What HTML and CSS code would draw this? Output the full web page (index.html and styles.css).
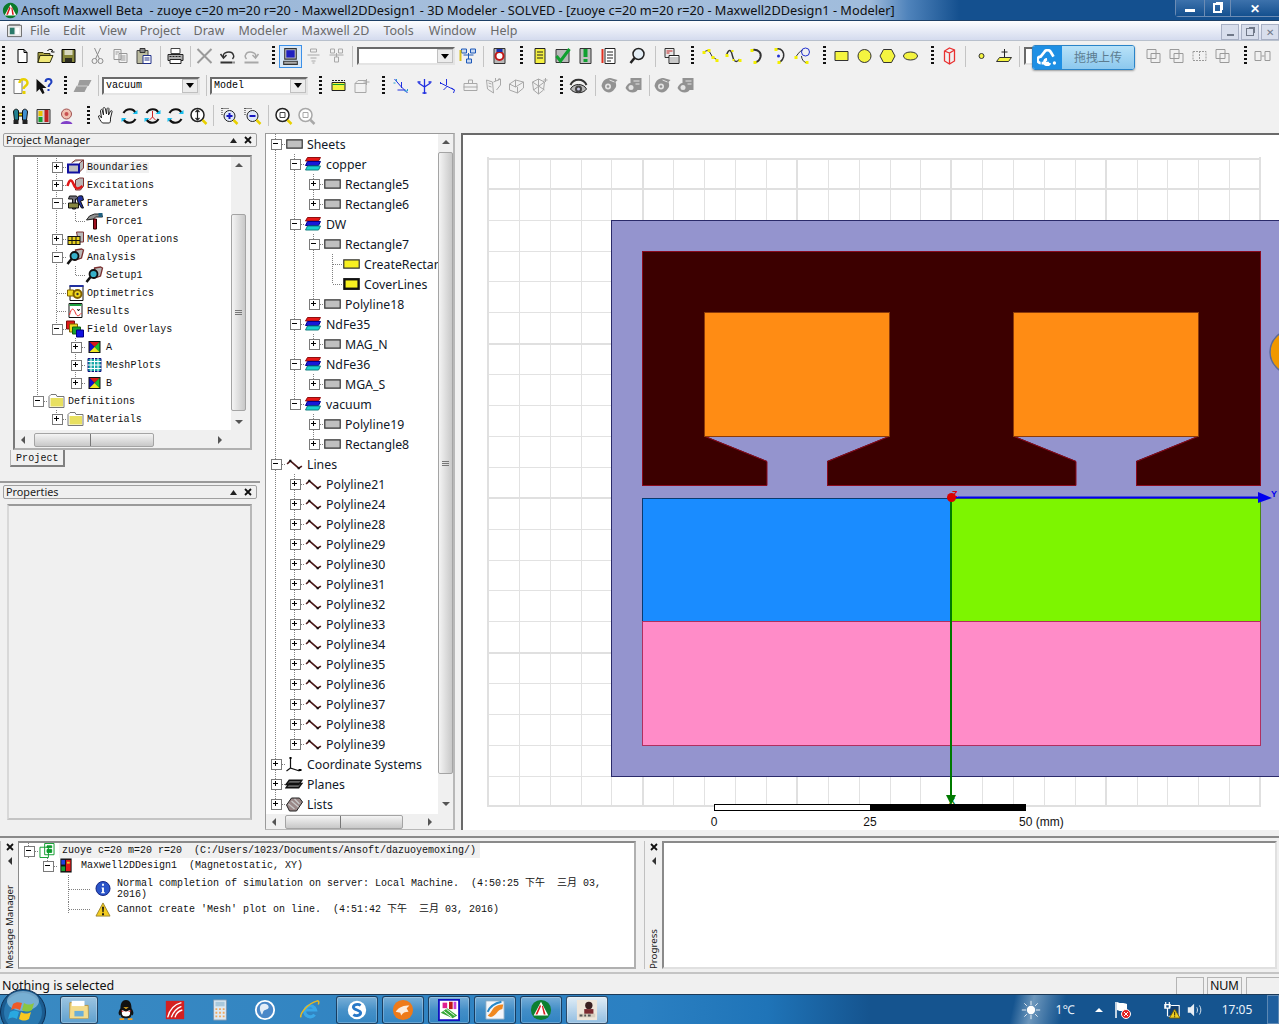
FILE: index.html
```html
<!DOCTYPE html>
<html lang="en">
<head>
<meta charset="utf-8">
<title>Ansoft Maxwell Beta</title>
<link rel="stylesheet" href="styles.css">
</head>
<body>
<svg class="defs" width="0" height="0" aria-hidden="true">
<defs>
<symbol id="i-mx" viewBox="0 0 20 20"><path d="M10 1a9 9 0 1 0 .01 0z" fill="#0a7a2a"/><path d="M10 3l7 13H3z" fill="#fff"/><path d="M9 5L5 15h2l3-8zM11 7l1 8h2l-2-9z" fill="#d81e1e"/></symbol>
<symbol id="i-new" viewBox="0 0 20 20"><path d="M5.500 3.500h6l3 3v10h-9z" fill="#fff" stroke="#000"/><path d="M11.500 3.500v3h3" fill="none" stroke="#000"/></symbol>
<symbol id="i-open" viewBox="0 0 20 20"><path d="M2.500 6.500h5l1 1h6v2h-10l-2 7z" fill="#a8a040" stroke="#303010"/><path d="M4.500 9.500h13l-3 7h-12z" fill="#f0e878" stroke="#303010"/><path d="M12 5c1-2 3-2 5-1l-1 2h3" fill="none" stroke="#000"/></symbol>
<symbol id="i-save" viewBox="0 0 20 20"><path d="M3.500 3.500h13v13h-13z" fill="#85853a" stroke="#000"/><path d="M6 4h8v5H6z" fill="#d8d8c0"/><path d="M6.500 12h7v4.500h-7z" fill="#2c2c20"/></symbol>
<symbol id="i-cut" viewBox="0 0 20 20" fill="none" stroke="#8c8c8c"><path d="M7 2l5 11M13 2L8 13"/><circle cx="7" cy="15" r="2.500"/><circle cx="13" cy="15" r="2.500"/></symbol>
<symbol id="i-copy" viewBox="0 0 20 20" fill="#f4f4f4" stroke="#969696"><path d="M3.500 3.500h7v10h-7zM8.500 7.500h8v9h-8z"/><path d="M10 10h5M10 12h5M10 14h5M5 6h4M5 8h2" fill="none"/></symbol>
<symbol id="i-paste" viewBox="0 0 20 20"><path d="M3.500 4.500h11v13h-11z" fill="#bcbca0" stroke="#444"/><path d="M6.500 2.500h5v4h-5z" fill="#888" stroke="#333"/><path d="M9.500 9.500h8v8h-8z" fill="#fff" stroke="#20308a"/><path d="M11 12h5M11 14h5" stroke="#20308a"/></symbol>
<symbol id="i-print" viewBox="0 0 20 20"><path d="M5.500 2.500h9v5h-9z" fill="#fff" stroke="#444"/><path d="M2.500 8.500h15v6h-15z" fill="#b0b0b0" stroke="#222"/><path d="M4.500 13.500h11v4h-11z" fill="#fff" stroke="#222"/><path d="M4 10.500h12" stroke="#222" stroke-dasharray="2 1"/></symbol>
<symbol id="i-x" viewBox="0 0 20 20"><path d="M3 3l14 14M17 3L3 17" stroke="#9a9a9a" stroke-width="2"/></symbol>
<symbol id="i-undo" viewBox="0 0 20 20" fill="none" stroke="#333"><path d="M6 11c-2-5 8-7 10-2 1 2 0 3-1 4" stroke-width="1.500"/><path d="M3 8l3 4 3-3" stroke-width="1.500"/><path d="M3 16.500h14" stroke-width="2" stroke-dasharray="12 1"/></symbol>
<symbol id="i-redo" viewBox="0 0 20 20" fill="none" stroke="#a8a8a8"><path d="M14 11c2-5-8-7-10-2-1 2 0 3 1 4" stroke-width="1.500"/><path d="M17 8l-3 4-3-3" stroke-width="1.500"/><path d="M3 16.500h14" stroke-width="2"/></symbol>
<symbol id="i-model" viewBox="0 0 20 20"><path d="M4.500 2.500h11v10h-11z" fill="#c4c4c4" stroke="#333"/><path d="M6 4h8v7H6z" fill="#2020c0"/><path d="M3.500 14.500h13v3h-13z" fill="#aaa" stroke="#333"/></symbol>
<symbol id="i-tree1" viewBox="0 0 20 20" fill="none" stroke="#a8a8a8"><path d="M7 3h6v3H7zM4 9h12M7 12h6M8 15h4M9 17h2"/></symbol>
<symbol id="i-tree2" viewBox="0 0 20 20" fill="none" stroke="#a8a8a8"><path d="M4 3h4v4H4zM12 3h4v4h-4zM10 7v4M3 9h14M8 11h4v5H8z"/></symbol>
<symbol id="i-hier" viewBox="0 0 20 20" fill="none" stroke="#1c58b8"><path d="M3 3h5v4H3zM12 3h5v4h-5zM8 13h5v4H8zM10 7v6M5 9h10" fill="#c8d8f0"/><path d="M2 4v11" stroke="#d8c020" stroke-width="2"/></symbol>
<symbol id="i-q" viewBox="0 0 20 20"><path d="M4.500 2.500h11v15h-11z" fill="#b8b8b8" stroke="#333"/><circle cx="10" cy="10" r="4" fill="#fff" stroke="#c01818" stroke-width="2"/><path d="M7 3h6v3H7z" fill="#1830b0"/></symbol>
<symbol id="i-doc1" viewBox="0 0 20 20"><path d="M5.500 2.500h10v15h-10z" fill="#f4f040" stroke="#222"/><path d="M7.500 6h6M7.500 9h6M7.500 12h6" stroke="#222"/></symbol>
<symbol id="i-check" viewBox="0 0 20 20"><path d="M3.500 3.500h13v13h-13z" fill="#b8b8b8" stroke="#333"/><path d="M4 10l4 5 9-12" fill="none" stroke="#10a030" stroke-width="3"/></symbol>
<symbol id="i-pill" viewBox="0 0 20 20"><path d="M4.500 2.500h11v15h-11z" fill="#c0c0c0" stroke="#333"/><path d="M8 3h4v8H8z" fill="#10a030"/><path d="M8 13h4v3H8z" fill="#10a030"/></symbol>
<symbol id="i-doc2" viewBox="0 0 20 20"><path d="M3 3h2v14H3z" fill="#e03020"/><path d="M6.500 2.500h10v15h-10z" fill="#fff" stroke="#222"/><path d="M8.500 6h6M8.500 9h6M8.500 12h6M8.500 15h4" stroke="#222"/></symbol>
<symbol id="i-mag" viewBox="0 0 20 20"><circle cx="11" cy="8" r="5.500" fill="#e4eef6" stroke="#222" stroke-width="1.500"/><path d="M7 12l-4 5" stroke="#222" stroke-width="2.500"/></symbol>
<symbol id="i-calc" viewBox="0 0 20 20"><path d="M3.500 2.500h9v9h-9z" fill="#e8e8e8" stroke="#333"/><path d="M5 5h6M5 7h3" stroke="#c02020"/><path d="M7.500 9.500h10v8h-10z" fill="#fff" stroke="#222"/><path d="M9 12h7M9 14h7M9 16h7" stroke="#222" stroke-dasharray="1 1"/></symbol>
<symbol id="i-line" viewBox="0 0 20 20"><path d="M3 6l5-2 4 7 5 3" fill="none" stroke="#333"/><path d="M2 5h3v3H2zM7 3h3v3H7zM11 10h3v3h-3zM15 13h3v3h-3z" fill="#f4f000"/></symbol>
<symbol id="i-spline" viewBox="0 0 20 20"><path d="M3 9c3-8 5-4 6 1s4 8 7 3" fill="none" stroke="#333" stroke-width="1.400"/><path d="M2 8h3v3H2zM8 4h2v2H8zM9 13h2v2H9zM15 13h3v3h-3z" fill="#f4f000"/></symbol>
<symbol id="i-arc1" viewBox="0 0 20 20"><path d="M6 4c6-1 9 3 8 7-1 3-3 5-5 5" fill="none" stroke="#333" stroke-width="2"/><path d="M4 3h3v3H4zM7 15h3v3H7z" fill="#f4f000"/></symbol>
<symbol id="i-arc2" viewBox="0 0 20 20"><path d="M7 3c5-1 8 3 7 8-1 3-3 5-5 5" fill="none" stroke="#333" stroke-width="1.500"/><circle cx="9" cy="10" r="1.500" fill="#2030d0"/><path d="M5 2h3v3H5zM8 15h3v3H8z" fill="#f4f000"/></symbol>
<symbol id="i-eq" viewBox="0 0 20 20"><path d="M3 11c2-2 4-6 7-7M9 10c0 3 2 6 5 7" fill="none" stroke="#333"/><ellipse cx="13" cy="6" rx="4" ry="4" fill="none" stroke="#2030d0"/><path d="M2 10h3v3H2zM13 15h3v3h-3z" fill="#f4f000"/></symbol>
<symbol id="i-yrect" viewBox="0 0 20 20"><path d="M3.500 5.500h13v9h-13z" fill="#f4f440" stroke="#333"/></symbol>
<symbol id="i-ycirc" viewBox="0 0 20 20"><circle cx="10" cy="10" r="6.500" fill="#f4f440" stroke="#333"/></symbol>
<symbol id="i-yhex" viewBox="0 0 20 20"><path d="M6 3.500h8l3.500 6.500L14 16.500H6L2.500 10z" fill="#f4f440" stroke="#333"/></symbol>
<symbol id="i-yell" viewBox="0 0 20 20"><ellipse cx="10" cy="10" rx="7" ry="4" fill="#f4f440" stroke="#333"/></symbol>
<symbol id="i-box" viewBox="0 0 20 20" fill="none" stroke="#e83030" stroke-width="1.300"><path d="M10 2l5 2v11l-5 3-5-3V5zM5 5l5 2 5-3M10 7v11"/></symbol>
<symbol id="i-pt" viewBox="0 0 20 20"><circle cx="10" cy="10" r="2.500" fill="#f4f440" stroke="#333"/></symbol>
<symbol id="i-plane" viewBox="0 0 20 20"><path d="M5 11.500h12l-3 4H2z" fill="#f4f440" stroke="#333"/><path d="M10 3v8M7 6h6" stroke="#222"/></symbol>
<symbol id="i-ov1" viewBox="0 0 20 20"><path d="M3.500 3.500h9v9h-9zM7.500 7.500h9v9h-9z" fill="none" stroke="#9a9a9a"/></symbol>
<symbol id="i-ov2" viewBox="0 0 20 20"><path d="M3.500 5.500h13v9h-13zM10 5v10" fill="none" stroke="#9a9a9a" stroke-dasharray="2 1"/></symbol>
<symbol id="i-sm" viewBox="0 0 20 20"><path d="M2.500 5.500h6v9h-6zM12.500 5.500h5v9h-5zM9 10h3" fill="none" stroke="#9a9a9a"/></symbol>
<symbol id="i-help" viewBox="0 0 20 20"><path d="M3.500 3.500h8v14h-8z" fill="#fff" stroke="#777"/><path d="M9 7c0-5 8-5 8 0 0 3-4 3-4 6" fill="none" stroke="#e8d000" stroke-width="2.500"/><path d="M12 15h3v3h-3z" fill="#e8d000"/></symbol>
<symbol id="i-what" viewBox="0 0 20 20"><path d="M3 3v13l3-3 3 5 2-1-2-5h4z" fill="#111"/><path d="M12 6c0-4 6-4 6 0 0 2-3 2-3 5" fill="none" stroke="#2040c0" stroke-width="2"/><path d="M14 13h2v2h-2z" fill="#2040c0"/></symbol>
<symbol id="i-sheet" viewBox="0 0 20 20"><path d="M6 4h12l-3 6h-1l-3 6H0l3-6h1z" fill="#9c9c9c"/><path d="M3 10h11" stroke="#d0d0d0"/></symbol>
<symbol id="i-prism1" viewBox="0 0 20 20"><path d="M3.500 6.500h13v8h-13z" fill="#f4f440" stroke="#222"/><path d="M3.500 4.500h13" stroke="#222" stroke-dasharray="2 1"/><path d="M4 8h12v1H4z" fill="#10a030"/></symbol>
<symbol id="i-prism2" viewBox="0 0 20 20" fill="none" stroke="#a8a8a8"><path d="M3.500 7.500h11v9h-11zM3.500 7.500l3-3h8v3M15 3v6M12 6h6"/></symbol>
<symbol id="i-ax1" viewBox="0 0 20 20" fill="none" stroke="#2030e0"><path d="M3 3l6 7 7 7M10 6v6M6 14h8"/><path d="M2 7h2M5 3v2M16 13v2M13 15h3" stroke="#20a0d0"/></symbol>
<symbol id="i-ax2" viewBox="0 0 20 20" fill="none" stroke="#2030e0" stroke-width="1.300"><path d="M10 3v15M4 7l6 4 6-4M3 6h3M14 6h3M8 17h4"/></symbol>
<symbol id="i-ax3" viewBox="0 0 20 20" fill="none" stroke="#2030e0"><path d="M3 7l14 7M9 3v6M3 6v2M14 12l3 2-1 3M6 14l4-4"/></symbol>
<symbol id="i-gb" viewBox="0 0 20 20" fill="none" stroke="#a8a8a8"><path d="M3.500 7.500h13v7h-13zM8 7V4h4v3M3 11h14"/></symbol>
<symbol id="i-gc1" viewBox="0 0 20 20" fill="none" stroke="#a8a8a8"><path d="M3 4l6 2 1 11-6-4zM10 6l7-3v6l-4 5M12 2v3M16 2l-2 3M5 7l3 1M5 10l3 1"/></symbol>
<symbol id="i-gc2" viewBox="0 0 20 20" fill="none" stroke="#a8a8a8"><path d="M3 8l6-4 8 2v6l-6 5-8-3zM9 4v7M3 8l6 3 8-5M11 17v-6"/></symbol>
<symbol id="i-gc3" viewBox="0 0 20 20" fill="none" stroke="#a8a8a8"><path d="M3 6l6-3 6 3-1 8-5 4-5-4zM9 3v15M3 6l12 8M15 6L4 14M16 2v4M14 4h4"/></symbol>
<symbol id="i-eye" viewBox="0 0 20 20"><path d="M2 9c3-7 13-7 16 0" fill="none" stroke="#333" stroke-width="2"/><path d="M2 13c3-6 13-6 16 0-3 5-13 5-16 0z" fill="#b8b8b8" stroke="#222"/><circle cx="10" cy="13" r="3.500" fill="#444"/><circle cx="10" cy="13" r="1.500" fill="#c8c8e8"/></symbol>
<symbol id="i-geye" viewBox="0 0 20 20"><path d="M2 10c1-6 5-8 9-8l7 2-2 2c1 3 1 5-1 7-3 5-10 5-13-3z" fill="#929292"/><circle cx="8.500" cy="10.500" r="3" fill="#e4e4e4"/><circle cx="8.500" cy="10.500" r="1.300" fill="#929292"/><path d="M10 4l5 2" stroke="#e4e4e4"/></symbol>
<symbol id="i-geye2" viewBox="0 0 20 20"><path d="M7 2h11v12h-4c-1 3-9 4-12-2 1-3 3-5 5-5z" fill="#929292"/><circle cx="7.500" cy="11.500" r="2.500" fill="#e4e4e4"/><path d="M10 5h6M12 8h4" stroke="#e4e4e4"/></symbol>
<symbol id="i-fit" viewBox="0 0 20 20"><path d="M3 6c0-3 4-4 5-1v9H4z" fill="#208090" stroke="#111"/><path d="M17 6c0-3-4-4-5-1v9h4z" fill="#4090d0" stroke="#111"/><path d="M8 7h4v3H8z" fill="#f0d000" stroke="#111"/><path d="M3 14h5v4H3zM12 14h5v4h-5z" fill="#222"/></symbol>
<symbol id="i-bar" viewBox="0 0 20 20"><path d="M3.500 3.500h13v14h-13z" fill="#d0d0d0" stroke="#333"/><path d="M5 5h4v5H5z" fill="#e8c000"/><path d="M5 11h4v5H5z" fill="#10a030"/><path d="M11 4h4v12h-4z" fill="#c02020"/></symbol>
<symbol id="i-pin" viewBox="0 0 20 20"><circle cx="10" cy="8" r="5" fill="#f0c0b0" stroke="#a05050"/><circle cx="10" cy="8" r="2" fill="#c85050"/><path d="M4 18c1-4 11-4 12 0z" fill="#8040c8"/></symbol>
<symbol id="i-hand" viewBox="0 0 20 20" fill="#fff" stroke="#222"><path d="M6 17c-2-2-4-5-4-7 1-1 2 0 3 2L4 5c0-2 2-2 2 0l1 4-.5-6c0-2 2-2 2.500 0L10 8l.5-5c.5-2 2-1 2 0L12 9l2-4c1-1 2 0 1.500 1L14 12c0 3 0 4-1 5z"/></symbol>
<symbol id="i-rot" viewBox="0 0 20 20" fill="none"><path d="M4 7c3-5 10-5 12 0" stroke="#111" stroke-width="2.200"/><path d="M16 13c-3 5-10 5-12 0" stroke="#111" stroke-width="2.200"/><path d="M13 8h5V4zM7 12H2v4z" fill="#18c0f0"/></symbol>
<symbol id="i-rot2" viewBox="0 0 20 20" fill="none"><path d="M4 7c3-5 10-5 12 0" stroke="#111" stroke-width="2.200"/><path d="M16 13c-3 5-10 5-12 0" stroke="#111" stroke-width="2.200"/><path d="M13 8h5V4zM7 12H2v4z" fill="#18c0f0"/><path d="M10 5v6M7 14l3-3 3 3" stroke="#d02020"/></symbol>
<symbol id="i-zud" viewBox="0 0 20 20"><circle cx="9" cy="9" r="6.500" fill="#fff" stroke="#222" stroke-width="1.500"/><path d="M9 4v10M7 6l2-2 2 2M7 12l2 2 2-2" fill="none" stroke="#222" stroke-width="1.200"/><path d="M14 14l4 4" stroke="#e8d000" stroke-width="2.500"/></symbol>
<symbol id="i-zin" viewBox="0 0 20 20"><path d="M2 2.500h7M2.500 2v8" stroke="#222" stroke-dasharray="1 1"/><circle cx="10" cy="10" r="5.500" fill="#dfe8f8" stroke="#222"/><path d="M7 10h6M10 7v6" stroke="#1818c0" stroke-width="2"/><path d="M14 14l4 4" stroke="#e8d000" stroke-width="2.500"/></symbol>
<symbol id="i-zout" viewBox="0 0 20 20"><path d="M2 2.500h7M2.500 2v8" stroke="#222" stroke-dasharray="1 1"/><circle cx="10" cy="10" r="5.500" fill="#dfe8f8" stroke="#222"/><path d="M7 10h6" stroke="#1818c0" stroke-width="2"/><path d="M14 14l4 4" stroke="#e8d000" stroke-width="2.500"/></symbol>
<symbol id="i-zbox" viewBox="0 0 20 20"><circle cx="9" cy="9" r="6.500" fill="#fff" stroke="#222" stroke-width="1.500"/><path d="M6.500 6.500h5v5h-5z" fill="none" stroke="#444"/><path d="M14 14l4 4" stroke="#e8d000" stroke-width="2.500"/></symbol>
<symbol id="i-zgray" viewBox="0 0 20 20"><circle cx="9" cy="9" r="6.500" fill="#fff" stroke="#a8a8a8" stroke-width="1.500"/><path d="M6.500 6.500h5v5h-5z" fill="none" stroke="#a8a8a8"/><path d="M14 14l4 4" stroke="#a8a8a8" stroke-width="2.500"/></symbol>
<symbol id="i-up" viewBox="0 0 7 5"><path d="M3.500 0L7 5H0z" fill="#222"/></symbol>
<symbol id="i-cl" viewBox="0 0 8 8"><path d="M1 1l6 6M7 1L1 7" stroke="#111" stroke-width="1.800"/></symbol>
<symbol id="t-bnd" viewBox="0 0 18 18"><path d="M5 5l4-3h8l-4 3v9l4-4V2" fill="#b8b8b8" stroke="#7a3030"/><path d="M1.500 6.500h11v8h-11z" fill="#c0c0c0" stroke="#1010a0" stroke-width="2"/></symbol>
<symbol id="t-exc" viewBox="0 0 18 18"><path d="M9 4l4-2h4v8l-3 4H9z" fill="#b8b8b8" stroke="#7a3030"/><path d="M1 10c2-7 4-7 6-2s4 6 9 2" fill="none" stroke="#e01818" stroke-width="2.500"/></symbol>
<symbol id="t-par" viewBox="0 0 18 18"><path d="M3 2h7l2 3H9v10H6V5H2z" fill="#70707a" stroke="#111"/><path d="M2 9h10v5H2z" fill="#888840" stroke="#111"/><path d="M16 2c-5-1-6 2-5 5l4 7h2l-3-7 3-1z" fill="#2030a0" stroke="#111"/></symbol>
<symbol id="t-force" viewBox="0 0 18 18"><path d="M1 8l3-4 5-2h7l1 3H10L8 7z" fill="#909090" stroke="#222"/><path d="M13 1h4v4h-4z" fill="#206080"/><path d="M8 7h3v10H8z" fill="#a01020" stroke="#300"/></symbol>
<symbol id="t-mesh" viewBox="0 0 18 18"><path d="M10 2h7v10h-5z" fill="#b8b8b8" stroke="#7a3030"/><path d="M1 6h13v9H1z" fill="#111"/><path d="M2 7h3v3H2zM6 7h3v3H6zM10 7h3v3h-3zM2 11h3v3H2zM6 11h3v3H6zM10 11h3v3h-3z" fill="#e8d020"/></symbol>
<symbol id="t-ana" viewBox="0 0 18 18"><path d="M9 2l6-1 2 1-2 8-6 2z" fill="#b8b8b8" stroke="#7a3030" stroke-width="1.300"/><circle cx="8" cy="8" r="4" fill="#38b0c8" stroke="#111" stroke-width="1.800"/><path d="M5 11l-4 5" stroke="#111" stroke-width="2.500"/></symbol>
<symbol id="t-opt" viewBox="0 0 18 18"><path d="M3.500 1.500h13v15h-13z" fill="#fff" stroke="#111"/><path d="M3 1h14v2H3z" fill="#2030a0"/><path d="M1 6h6v6H1z" fill="#f0d820" stroke="#806000"/><circle cx="11" cy="10" r="4" fill="#f0d820" stroke="#806000" stroke-width="2"/><circle cx="11" cy="10" r="1.200" fill="#333"/></symbol>
<symbol id="t-res" viewBox="0 0 18 18"><path d="M2.500 1.500h13v14h-13z" fill="#fff" stroke="#111"/><path d="M3 2h12v2H3z" fill="#20a040"/><path d="M3 13c2-8 4-7 6-2s4 2 6 0" fill="none" stroke="#e82828"/><path d="M11 7l1 2 1-2" stroke="#111" fill="none"/></symbol>
<symbol id="t-field" viewBox="0 0 18 18"><path d="M0 1h8v8H0z" fill="#e01818" stroke="#7a1010"/><path d="M3 4h8v8H3z" fill="#f0d820" stroke="#806000"/><path d="M6 7h8v7H6z" fill="#18a030" stroke="#106010"/><path d="M10 10h7v7h-7z" fill="#1010e0" stroke="#000080"/></symbol>
<symbol id="t-xy" viewBox="-2 -2 18 18"><path d="M1 1h12v12H1z" fill="#111"/><path d="M2 2l5 5 5-5z" fill="#d81818"/><path d="M2 2l5 5-5 5z" fill="#1010d0"/><path d="M12 2L7 7l5 5z" fill="#18c030"/><path d="M2 12l5-5 5 5z" fill="#f0e820"/></symbol>
<symbol id="t-grid" viewBox="-2 -2 18 18"><path d="M.5.500h13v13H.5z" fill="#18a8a8" stroke="#101080"/><path d="M3.500 0v14M7 0v14M10.500 0v14M0 3.500h14M0 7h14M0 10.500h14" stroke="#fff"/></symbol>
<symbol id="t-folder" viewBox="-1 -2 18 18"><path d="M.5 2.500l2-2h5l1 2h7v11H.5z" fill="#fff" stroke="#777"/><path d="M2 4h12.500v8.500H2z" fill="#e8e060"/></symbol>
<symbol id="t-proj" viewBox="0 0 16 16" fill="#fff" stroke="#0a9a2a"><path d="M.5 4.500h9v11h-9zM5.500.5h10v12h-10z"/><path d="M8 3h5v2H8zM8 7h5v3H8z" fill="#0a9a2a"/></symbol>
<symbol id="t-des" viewBox="0 0 16 16"><path d="M2 .5h12v15H2z" fill="#111"/><path d="M3 2h4v5H3z" fill="#2040e0"/><path d="M3 9h4v5H3z" fill="#18a030"/><path d="M8 2h5v12H8z" fill="#e01818"/><path d="M9 4h3v2H9z" fill="#e8d020"/></symbol>
<symbol id="t-info" viewBox="0 0 16 16"><circle cx="8" cy="8" r="7.500" fill="#2a54c8" stroke="#102080"/><path d="M7 3h2v2H7zM6.500 7H9v5h1v1H6v-1h1V8h-.5z" fill="#fff"/></symbol>
<symbol id="t-warn" viewBox="0 0 16 16"><path d="M8 1l7.500 14H.5z" fill="#f4cc20" stroke="#9a8430"/><path d="M7 5h2l-.4 6H7.400zM7 12h2v2H7z" fill="#111"/></symbol>
<symbol id="t-rect" viewBox="0 0 16 12"><path d="M1.500 2.500h13v7h-13z" fill="#c0c0c0" stroke="#333"/></symbol>
<symbol id="t-layer" viewBox="0 0 18 16"><path d="M3 1.500h13l-2 3.500H1z" fill="#e81818" stroke="#901010"/><path d="M3 5.500h13l-2 4H1z" fill="#1818d8" stroke="#000090"/><path d="M3 10h13l-2 4H1z" fill="#18d0d0" stroke="#108080"/></symbol>
<symbol id="t-yrect" viewBox="0 0 16 12"><path d="M1.500 2.500h13v7h-13z" fill="#f8f020" stroke="#333"/></symbol>
<symbol id="t-cover" viewBox="0 0 16 12"><path d="M1 1h14v10H1z" fill="#111"/><path d="M3 3h10v6H3z" fill="#f8f020"/></symbol>
<symbol id="t-poly" viewBox="0 0 18 12"><path d="M2 6l3-3 8 7 3-2" fill="none" stroke="#4a1818" stroke-width="1.600"/><path d="M4 2h2v2H4zM12 9h2v2h-2z" fill="#111"/></symbol>
<symbol id="t-cs" viewBox="0 0 18 16"><path d="M5 1v11l9 3M5 12L1 15" fill="none" stroke="#111" stroke-width="1.200"/><path d="M4 1h2v2H4zM13 13h3v2h-3z"/></symbol>
<symbol id="t-pl" viewBox="0 0 18 14"><path d="M4 3.500h12l-3 4H1zM4 6.500h12l-3 4H1z" fill="#666" stroke="#111" stroke-width="1.300"/></symbol>
<symbol id="t-ls" viewBox="0 0 18 16"><path d="M6 2h8l3 4-6 9H4L1 9z" fill="#9a8888" stroke="#222"/><path d="M3 8l6 5M6 5l7 6M9 3l5 5" stroke="#c8c8c8" stroke-width="1.300"/></symbol>
<symbol id="w-cloud" viewBox="0 0 24 18"><path d="M4 15a3.500 3.500 0 0 1 0-7l4-5a4 4 0 0 1 7 0l3 5" fill="none" stroke="#fff" stroke-width="3"/><path d="M5 15h8M11 11a3 3 0 1 0 3 4" fill="none" stroke="#fff" stroke-width="3"/><circle cx="19" cy="15" r="1.800" fill="#fff"/></symbol>
<symbol id="k-orb" viewBox="0 0 46 46"><circle cx="23" cy="23" r="22.500" fill="#1b5c90" stroke="#0c2c50"/><circle cx="23" cy="23" r="19" fill="#2878b0"/><ellipse cx="23" cy="12" rx="16" ry="10" fill="#b8dcf0" opacity=".55"/><path d="M13 15c3-2 5-2 9-1l-2 7c-3-2-6-2-9 0z" fill="#f05a28"/><path d="M24 14c4 2 6 2 10 0l-2 7c-4 2-6 2-10 0z" fill="#8cc63f"/><path d="M10 23c3-2 6-2 9 0l-2 7c-3-2-6-2-9 0z" fill="#29a8e0"/><path d="M21 23c4 2 6 2 10 0l-2 7c-4 2-6 2-10 0z" fill="#f8c820"/></symbol>
<symbol id="k-folder" viewBox="0 0 24 24"><path d="M2 4h8l2 3h10v14H2z" fill="#f2d67c" stroke="#b89440"/><path d="M4 2h14v6H4z" fill="#fff"/><path d="M3 8h18l1 13H2z" fill="#f4dc8c"/><path d="M7 13h10v6H7z" fill="#6aaed8"/></symbol>
<symbol id="k-qq" viewBox="0 0 24 24"><path d="M12 1c5 0 6 5 6 9 2 3 3 6 1 8l-1-1c0 3-2 4-6 4s-6-1-6-4l-1 1c-2-2-1-5 1-8 0-4 1-9 6-9z" fill="#111"/><path d="M8 12c3 2 5 2 8 0 1 4 1 7-4 7s-5-3-4-7z" fill="#fff"/><path d="M7 12c3 3 7 3 10 0v2H7z" fill="#e02020"/><path d="M9 9h6l-3 2z" fill="#f8b820"/><path d="M5 21h5v2H5zM14 21h5v2h-5z" fill="#f8a020"/></symbol>
<symbol id="k-red" viewBox="0 0 24 24"><path d="M2 2h20v20H2z" fill="#d42020"/><path d="M4 20C6 12 11 6 19 4M8 20c2-6 6-10 11-12M12 20c1-4 4-7 8-8" fill="none" stroke="#fff" stroke-width="1.500"/></symbol>
<symbol id="k-calc" viewBox="0 0 24 24"><path d="M5 1h14v22H5z" fill="#dfeaf2" stroke="#7a96b0"/><path d="M7 3h10v5H7z" fill="#a8c8dc"/><path d="M7 10h2v2H7zM11 10h2v2h-2zM15 10h2v2h-2zM7 14h2v2H7zM11 14h2v2h-2zM15 14h2v2h-2zM7 18h2v2H7zM11 18h2v2h-2zM15 18h2v2h-2z" fill="#f0a860"/></symbol>
<symbol id="k-globe" viewBox="0 0 24 24"><circle cx="12" cy="12" r="10" fill="#4a88c8" stroke="#fff" stroke-width="2"/><path d="M8 6c4-2 8 0 8 3s-5 2-6 5-1 4-2 2-3-7 0-10z" fill="#fff" opacity=".85"/></symbol>
<symbol id="k-ie" viewBox="0 0 24 24"><path d="M7 12h11a6 6 0 1 0-1 5" fill="none" stroke="#3aa8e8" stroke-width="3.500"/><path d="M2 20C1 16 9 5 20 2c2 0 2 2 1 4" fill="none" stroke="#e8b820" stroke-width="1.600"/></symbol>
<symbol id="k-s" viewBox="0 0 24 24"><circle cx="12" cy="12" r="10" fill="#fff"/><path d="M16 7c-3-2-8-1-8 2s8 3 8 6-5 4-8 2" fill="none" stroke="#2878c8" stroke-width="3"/></symbol>
<symbol id="k-fox" viewBox="0 0 24 24"><circle cx="12" cy="12" r="11" fill="#ee7a1a"/><path d="M4 14c4-6 9-7 15-7l-3 3 2 4c-4 0-6 1-8 4l-1-3z" fill="#fff" opacity=".85"/></symbol>
<symbol id="k-mesh" viewBox="0 0 24 24"><path d="M1 1h22v22H1z" fill="#fff" stroke="#1010c0" stroke-width="2"/><path d="M5 4h5v6H5z" fill="#e02090"/><path d="M12 3h4v8h-4z" fill="#c01818"/><path d="M17 3h3v8h-3z" fill="#d040d0"/><path d="M3 15l7-5 11 8-5 3z" fill="#38a838"/><path d="M6 13l9 7M9 11l9 7" stroke="#fff"/></symbol>
<symbol id="k-swirl" viewBox="0 0 24 24"><path d="M2 2h20v20H2z" fill="#f4f6fa" stroke="#78a0c0"/><path d="M4 18c4-2 4-7 9-10 3-2 6-2 8-2l-1 5c-5 1-5 4-9 7-2 2-5 2-7 0z" fill="#f08820"/><path d="M4 14c2-5 6-9 15-11" fill="none" stroke="#2888c8" stroke-width="2"/></symbol>
<symbol id="k-mx" viewBox="0 0 24 24"><circle cx="12" cy="12" r="11" fill="#0c8030"/><path d="M12 3l8 15H4z" fill="#fff"/><path d="M11 6L6 17h2l4-9zM13 8l2 9h2l-3-10z" fill="#d81e1e"/></symbol>
<symbol id="k-photo" viewBox="0 0 24 24"><path d="M1 1h22v22H1z" fill="#efe6da"/><circle cx="14" cy="7" r="4" fill="#3a2020"/><path d="M9 11h10v7H9z" fill="#7a2a30"/><path d="M3 16h18v4H3z" fill="#d8cfc0"/><path d="M4 17h3v2H4zM9 17h2v2H9zM13 17h3v2h-3z" fill="#555"/></symbol>
<symbol id="k-sun" viewBox="0 0 24 24"><circle cx="12" cy="12" r="5" fill="#fff"/><path d="M12 1v5M12 18v5M1 12h5M18 12h5M4 4l3 3M17 17l3 3M20 4l-3 3M7 17l-3 3" stroke="#fff"/></symbol>
<symbol id="k-flag" viewBox="0 0 18 18"><path d="M2 1v16" stroke="#fff" stroke-width="1.500"/><path d="M3 1c4 2 6 0 10 2v8c-4-2-6 0-10-2z" fill="#fff"/><circle cx="12" cy="13" r="4.500" fill="#e02020" stroke="#fff"/><path d="M10 11l4 4M14 11l-4 4" stroke="#fff"/></symbol>
<symbol id="k-net" viewBox="0 0 20 20"><path d="M3 1v7M7 1v7M2 4h6v4H2zM5 8v9" stroke="#fff" fill="none" stroke-width="1.300"/><path d="M9 5h9v12H6" stroke="#fff" fill="#123f70" stroke-width="1.200"/><path d="M13 9l6 10H7z" fill="#f0d020" stroke="#6a5a10"/><path d="M12.500 12h1v4h-1zM12.500 17h1v1h-1z" fill="#111"/></symbol>
<symbol id="k-spk" viewBox="0 0 20 20"><path d="M2 7h3l4-4v14l-4-4H2z" fill="#e8eef4"/><path d="M12 7c1 2 1 4 0 6M15 5c2 3 2 7 0 10" fill="none" stroke="#e8eef4"/></symbol>
</defs>
</svg>

<header class="titlebar">
  <svg class="title-ic"><use href="#i-mx"/></svg>
  <span class="title-text">Ansoft Maxwell Beta  - zuoye c=20 m=20 r=20 - Maxwell2DDesign1 - 3D Modeler - SOLVED - [zuoye c=20 m=20 r=20 - Maxwell2DDesign1 - Modeler]</span>
  <div class="winbtns">
    <span class="wb wb-min"><i></i></span>
    <span class="wb wb-res"><i></i></span>
    <span class="wb wb-cls">✕</span>
  </div>
</header>

<nav class="menubar">
  <svg class="doc-ic" viewBox="0 0 16 16"><path d="M.5 2.500h15v12H.5z" fill="#e8e8e8" stroke="#666"/><path d="M2 1h12v2H2z" fill="#8a8a8a"/><path d="M3 5h5v7H3z" fill="#2a7a6a"/><path d="M9 5h4v7H9z" fill="#fff"/></svg>
  <span class="mi mi-file">File</span>
  <span class="mi mi-edit">Edit</span>
  <span class="mi mi-view">View</span>
  <span class="mi mi-proj">Project</span>
  <span class="mi mi-draw">Draw</span>
  <span class="mi mi-mod">Modeler</span>
  <span class="mi mi-mx">Maxwell 2D</span>
  <span class="mi mi-tools">Tools</span>
  <span class="mi mi-win">Window</span>
  <span class="mi mi-help">Help</span>
  <div class="mdibtns">
    <span class="mb"><i class="mb-min"></i></span>
    <span class="mb"><i class="mb-res"></i></span>
    <span class="mb mb-x">✕</span>
  </div>
</nav>

<section class="toolbars">
  <div class="tb tb1">
    <i class="gr"></i>
    <svg class="tl m5"><use href="#i-new"/></svg><svg class="tl"><use href="#i-open"/></svg><svg class="tl"><use href="#i-save"/></svg>
    <i class="sp m2"></i>
    <svg class="tl m3"><use href="#i-cut"/></svg><svg class="tl"><use href="#i-copy"/></svg><svg class="tl"><use href="#i-paste"/></svg>
    <i class="sp m5"></i>
    <svg class="tl m3"><use href="#i-print"/></svg>
    <i class="sp m3"></i>
    <svg class="tl m2"><use href="#i-x"/></svg><svg class="tl"><use href="#i-undo"/></svg><svg class="tl m1"><use href="#i-redo"/></svg>
    <i class="gr m10"></i>
    <svg class="tl m3 on"><use href="#i-model"/></svg><svg class="tl"><use href="#i-tree1"/></svg><svg class="tl"><use href="#i-tree2"/></svg>
    <i class="sp m4"></i>
    <span class="combo m4"><span class="combo-v"></span><i class="dd"></i></span>
    <svg class="tl m2"><use href="#i-hier"/></svg>
    <i class="sp m3"></i>
    <svg class="tl m4"><use href="#i-q"/></svg>
    <i class="gr m9"></i>
    <svg class="tl m4"><use href="#i-doc1"/></svg><svg class="tl"><use href="#i-check"/></svg><svg class="tl"><use href="#i-pill"/></svg><svg class="tl"><use href="#i-doc2"/></svg>
    <svg class="tl m6"><use href="#i-mag"/></svg>
    <i class="sp m6"></i>
    <svg class="tl m4"><use href="#i-calc"/></svg>
    <i class="gr m8"></i>
    <svg class="tl m4"><use href="#i-line"/></svg><svg class="tl"><use href="#i-spline"/></svg><svg class="tl"><use href="#i-arc1"/></svg><svg class="tl"><use href="#i-arc2"/></svg><svg class="tl"><use href="#i-eq"/></svg>
    <i class="gr m10"></i>
    <svg class="tl m3"><use href="#i-yrect"/></svg><svg class="tl"><use href="#i-ycirc"/></svg><svg class="tl"><use href="#i-yhex"/></svg><svg class="tl"><use href="#i-yell"/></svg>
    <i class="gr m10"></i>
    <svg class="tl m3"><use href="#i-box"/></svg>
    <i class="sp m4"></i>
    <svg class="tl m4"><use href="#i-pt"/></svg><svg class="tl"><use href="#i-plane"/></svg>
    <i class="sp m3"></i>
    <span class="combo combo-hid m4"></span>
    <svg class="tl m8"><use href="#i-ov1"/></svg><svg class="tl"><use href="#i-ov1"/></svg><svg class="tl"><use href="#i-ov2"/></svg><svg class="tl"><use href="#i-ov1"/></svg>
    <i class="gr m11"></i>
    <svg class="tl m3"><use href="#i-sm"/></svg>
  </div>
  <div class="tb tb2">
    <i class="gr"></i>
    <svg class="tl m3"><use href="#i-help"/></svg><svg class="tl"><use href="#i-what"/></svg>
    <i class="gr m10"></i>
    <svg class="tl m4"><use href="#i-sheet"/></svg>
    <i class="sp m3"></i>
    <span class="combo m3"><span class="combo-v">vacuum</span><i class="dd"></i></span>
    <i class="sp m6"></i>
    <span class="combo m3"><span class="combo-v">Model</span><i class="dd"></i></span>
    <i class="gr m12"></i>
    <svg class="tl m4"><use href="#i-prism1"/></svg><svg class="tl"><use href="#i-prism2"/></svg>
    <i class="gr m9"></i>
    <svg class="tl m4"><use href="#i-ax1"/></svg><svg class="tl"><use href="#i-ax2"/></svg><svg class="tl"><use href="#i-ax3"/></svg><svg class="tl"><use href="#i-gb"/></svg><svg class="tl"><use href="#i-gc1"/></svg><svg class="tl"><use href="#i-gc2"/></svg><svg class="tl"><use href="#i-gc3"/></svg>
    <i class="gr m9"></i>
    <svg class="tl m3"><use href="#i-eye"/></svg>
    <i class="sp m5"></i>
    <svg class="tl m2"><use href="#i-geye"/></svg><svg class="tl m1"><use href="#i-geye2"/></svg>
    <i class="sp m4"></i>
    <svg class="tl m1"><use href="#i-geye"/></svg><svg class="tl"><use href="#i-geye2"/></svg>
  </div>
  <div class="tb tb3">
    <i class="gr"></i>
    <svg class="tl m3"><use href="#i-fit"/></svg><svg class="tl"><use href="#i-bar"/></svg><svg class="tl"><use href="#i-pin"/></svg>
    <i class="gr m10"></i>
    <svg class="tl m4"><use href="#i-hand"/></svg><svg class="tl"><use href="#i-rot"/></svg><svg class="tl"><use href="#i-rot2"/></svg><svg class="tl"><use href="#i-rot"/></svg><svg class="tl"><use href="#i-zud"/></svg>
    <i class="sp m3"></i>
    <svg class="tl m4"><use href="#i-zin"/></svg><svg class="tl"><use href="#i-zout"/></svg>
    <i class="sp m4"></i>
    <svg class="tl m3"><use href="#i-zbox"/></svg><svg class="tl"><use href="#i-zgray"/></svg>
  </div>
  <div class="upload">
    <span class="upload-ic"><svg class="upload-svg"><use href="#w-cloud"/></svg></span>
    <span class="upload-tx">拖拽上传</span>
  </div>
</section>

<main class="workspace">
  <aside class="leftcol">
    <div class="dock-h dock-h1"><span>Project Manager</span><svg class="dh-up"><use href="#i-up"/></svg><svg class="dh-cl"><use href="#i-cl"/></svg></div>
    <div class="ptree-frame">
      <div class="ptree-main">
        <div class="ptree mono">
          <div class="row"><i class="g"></i><i class="t p"></i><svg class="ic"><use href="#t-bnd"/></svg><span class="lb sel">Boundaries</span></div>
          <div class="row"><i class="g"></i><i class="t p"></i><svg class="ic"><use href="#t-exc"/></svg><span class="lb">Excitations</span></div>
          <div class="row"><i class="g"></i><i class="t m"></i><svg class="ic"><use href="#t-par"/></svg><span class="lb">Parameters</span></div>
          <div class="row"><i class="g"></i><i class="g"></i><i class="l"></i><svg class="ic"><use href="#t-force"/></svg><span class="lb">Force1</span></div>
          <div class="row"><i class="g"></i><i class="t p"></i><svg class="ic"><use href="#t-mesh"/></svg><span class="lb">Mesh Operations</span></div>
          <div class="row"><i class="g"></i><i class="t m"></i><svg class="ic"><use href="#t-ana"/></svg><span class="lb">Analysis</span></div>
          <div class="row"><i class="g"></i><i class="g"></i><i class="l"></i><svg class="ic"><use href="#t-ana"/></svg><span class="lb">Setup1</span></div>
          <div class="row"><i class="g"></i><i class="j"></i><svg class="ic"><use href="#t-opt"/></svg><span class="lb">Optimetrics</span></div>
          <div class="row"><i class="g"></i><i class="j"></i><svg class="ic"><use href="#t-res"/></svg><span class="lb">Results</span></div>
          <div class="row"><i class="g"></i><i class="t m last"></i><svg class="ic"><use href="#t-field"/></svg><span class="lb">Field Overlays</span></div>
          <div class="row"><i class="g"></i><i class="n"></i><i class="t p"></i><svg class="ic"><use href="#t-xy"/></svg><span class="lb">A</span></div>
          <div class="row"><i class="g"></i><i class="n"></i><i class="t p"></i><svg class="ic"><use href="#t-grid"/></svg><span class="lb">MeshPlots</span></div>
          <div class="row"><i class="g"></i><i class="n"></i><i class="t p last"></i><svg class="ic"><use href="#t-xy"/></svg><span class="lb">B</span></div>
          <div class="row"><i class="t m last"></i><svg class="ic"><use href="#t-folder"/></svg><span class="lb">Definitions</span></div>
          <div class="row"><i class="n"></i><i class="t p last"></i><svg class="ic"><use href="#t-folder"/></svg><span class="lb">Materials</span></div>
        </div>
        <div class="vs vs-left"><i class="ar ar-u"></i><i class="th th-l"></i><i class="ar ar-d"></i></div>
      </div>
      <div class="hs hs-left"><i class="ar ar-l"></i><i class="th th-h1"></i><i class="ar ar-r"></i></div>
    </div>
    <div class="tab-row"><span class="tab mono">Project</span></div>
    <div class="split"></div>
    <div class="dock-h dock-h2"><span>Properties</span><svg class="dh-up"><use href="#i-up"/></svg><svg class="dh-cl"><use href="#i-cl"/></svg></div>
    <div class="props"></div>
  </aside>

  <section class="modeltree">
    <div class="mt-main">
      <div class="mtree">
        <div class="row"><i class="t m"></i><svg class="ic"><use href="#t-rect"/></svg><span class="lb">Sheets</span></div>
        <div class="row"><i class="g"></i><i class="t m"></i><svg class="ic"><use href="#t-layer"/></svg><span class="lb">copper</span></div>
        <div class="row"><i class="g"></i><i class="g"></i><i class="t p"></i><svg class="ic"><use href="#t-rect"/></svg><span class="lb">Rectangle5</span></div>
        <div class="row"><i class="g"></i><i class="g"></i><i class="t p last"></i><svg class="ic"><use href="#t-rect"/></svg><span class="lb">Rectangle6</span></div>
        <div class="row"><i class="g"></i><i class="t m"></i><svg class="ic"><use href="#t-layer"/></svg><span class="lb">DW</span></div>
        <div class="row"><i class="g"></i><i class="g"></i><i class="t m"></i><svg class="ic"><use href="#t-rect"/></svg><span class="lb">Rectangle7</span></div>
        <div class="row"><i class="g"></i><i class="g"></i><i class="g"></i><i class="j"></i><svg class="ic"><use href="#t-yrect"/></svg><span class="lb">CreateRectangle</span></div>
        <div class="row"><i class="g"></i><i class="g"></i><i class="g"></i><i class="l"></i><svg class="ic"><use href="#t-cover"/></svg><span class="lb">CoverLines</span></div>
        <div class="row"><i class="g"></i><i class="g"></i><i class="t p last"></i><svg class="ic"><use href="#t-rect"/></svg><span class="lb">Polyline18</span></div>
        <div class="row"><i class="g"></i><i class="t m"></i><svg class="ic"><use href="#t-layer"/></svg><span class="lb">NdFe35</span></div>
        <div class="row"><i class="g"></i><i class="g"></i><i class="t p last"></i><svg class="ic"><use href="#t-rect"/></svg><span class="lb">MAG_N</span></div>
        <div class="row"><i class="g"></i><i class="t m"></i><svg class="ic"><use href="#t-layer"/></svg><span class="lb">NdFe36</span></div>
        <div class="row"><i class="g"></i><i class="g"></i><i class="t p last"></i><svg class="ic"><use href="#t-rect"/></svg><span class="lb">MGA_S</span></div>
        <div class="row"><i class="g"></i><i class="t m last"></i><svg class="ic"><use href="#t-layer"/></svg><span class="lb">vacuum</span></div>
        <div class="row"><i class="g"></i><i class="n"></i><i class="t p"></i><svg class="ic"><use href="#t-rect"/></svg><span class="lb">Polyline19</span></div>
        <div class="row"><i class="g"></i><i class="n"></i><i class="t p last"></i><svg class="ic"><use href="#t-rect"/></svg><span class="lb">Rectangle8</span></div>
        <div class="row"><i class="t m"></i><svg class="ic"><use href="#t-poly"/></svg><span class="lb">Lines</span></div>
        <div class="row"><i class="g"></i><i class="t p"></i><svg class="ic"><use href="#t-poly"/></svg><span class="lb">Polyline21</span></div>
        <div class="row"><i class="g"></i><i class="t p"></i><svg class="ic"><use href="#t-poly"/></svg><span class="lb">Polyline24</span></div>
        <div class="row"><i class="g"></i><i class="t p"></i><svg class="ic"><use href="#t-poly"/></svg><span class="lb">Polyline28</span></div>
        <div class="row"><i class="g"></i><i class="t p"></i><svg class="ic"><use href="#t-poly"/></svg><span class="lb">Polyline29</span></div>
        <div class="row"><i class="g"></i><i class="t p"></i><svg class="ic"><use href="#t-poly"/></svg><span class="lb">Polyline30</span></div>
        <div class="row"><i class="g"></i><i class="t p"></i><svg class="ic"><use href="#t-poly"/></svg><span class="lb">Polyline31</span></div>
        <div class="row"><i class="g"></i><i class="t p"></i><svg class="ic"><use href="#t-poly"/></svg><span class="lb">Polyline32</span></div>
        <div class="row"><i class="g"></i><i class="t p"></i><svg class="ic"><use href="#t-poly"/></svg><span class="lb">Polyline33</span></div>
        <div class="row"><i class="g"></i><i class="t p"></i><svg class="ic"><use href="#t-poly"/></svg><span class="lb">Polyline34</span></div>
        <div class="row"><i class="g"></i><i class="t p"></i><svg class="ic"><use href="#t-poly"/></svg><span class="lb">Polyline35</span></div>
        <div class="row"><i class="g"></i><i class="t p"></i><svg class="ic"><use href="#t-poly"/></svg><span class="lb">Polyline36</span></div>
        <div class="row"><i class="g"></i><i class="t p"></i><svg class="ic"><use href="#t-poly"/></svg><span class="lb">Polyline37</span></div>
        <div class="row"><i class="g"></i><i class="t p"></i><svg class="ic"><use href="#t-poly"/></svg><span class="lb">Polyline38</span></div>
        <div class="row"><i class="g"></i><i class="t p last"></i><svg class="ic"><use href="#t-poly"/></svg><span class="lb">Polyline39</span></div>
        <div class="row"><i class="t p"></i><svg class="ic"><use href="#t-cs"/></svg><span class="lb">Coordinate Systems</span></div>
        <div class="row"><i class="t p"></i><svg class="ic"><use href="#t-pl"/></svg><span class="lb">Planes</span></div>
        <div class="row"><i class="t p last"></i><svg class="ic"><use href="#t-ls"/></svg><span class="lb">Lists</span></div>
      </div>
      <div class="vs vs-mid"><i class="ar ar-u"></i><i class="th th-m"></i><i class="ar ar-d"></i></div>
    </div>
    <div class="hs hs-mid"><i class="ar ar-l"></i><i class="th th-h2"></i><i class="ar ar-r"></i></div>
  </section>

  <section class="viewport">
    <svg class="model" viewBox="461 133 818 697" preserveAspectRatio="none">
      <path d="M519.500 158V807M550.500 158V807M581.500 158V807M611.500 158V807M673.500 158V807M704.500 158V807M735.500 158V807M766.500 158V807M828.500 158V807M859.500 158V807M890.500 158V807M920.500 158V807M982.500 158V807M1013.500 158V807M1044.500 158V807M1075.500 158V807M1137.500 158V807M1167.500 158V807M1198.500 158V807M1229.500 158V807M488 220.500H1260M488 251.500H1260M488 281.500H1260M488 312.500H1260M488 374.500H1260M488 405.500H1260M488 436.500H1260M488 467.500H1260M488 529.500H1260M488 560.500H1260M488 590.500H1260M488 621.500H1260M488 683.500H1260M488 714.500H1260M488 745.500H1260M488 776.500H1260" fill="none" stroke="#e2e2e2" stroke-width="1"/>
      <path d="M488 157V807M643 158V807M797 158V807M951 158V807M1106 158V807M1260 157V807M488 159H1261M488 189H1261M488 344H1261M488 498H1261M488 653H1261M488 806H1261" fill="none" stroke="#e0e0e0" stroke-width="2"/>
      <rect x="611.500" y="220.500" width="680" height="556" fill="#9494ce" stroke="#2a2a6a"/>
      <rect x="642.500" y="251.500" width="618" height="234" fill="#3c0000" stroke="#8a0a1e"/>
      <path d="M705 436l62 25v25h60v-25l62-25zM1014 436l62 25v25h60v-25l62-25z" fill="#9494ce"/>
      <path d="M705 436.500l62 25v24M827.500 485.500v-24l61.500-25M1014 436.500l62 25v24M1136.500 485.500v-24l61.500-25" fill="none" stroke="#8a0a1e"/>
      <rect x="704.500" y="312.500" width="185" height="124" fill="#ff8c14" stroke="#8a3a0a"/>
      <rect x="1013.500" y="312.500" width="185" height="124" fill="#ff8c14" stroke="#8a3a0a"/>
      <rect x="642.500" y="498.500" width="309" height="123" fill="#1a8cff" stroke="#0a3a70"/>
      <rect x="951.500" y="498.500" width="309" height="123" fill="#7df500" stroke="#4a8a10"/>
      <rect x="642.500" y="621.500" width="618" height="124" fill="#ff8cc8" stroke="#b03060"/>
      <path d="M951.500 621.500V745.500" stroke="#b03060"/>
      <circle cx="1292" cy="352" r="22" fill="#f09800" stroke="#5a6a9a" stroke-width="1.500"/>
      <path d="M951 498V798" stroke="#007a00" stroke-width="2"/>
      <path d="M946 795h10l-5 10z" fill="#007a00"/>
      <path d="M951 497.500H1262" stroke="#0000f0" stroke-width="2"/>
      <path d="M1258 492v11l14-5z" fill="#0000f0"/>
      <circle cx="951.500" cy="497.500" r="4.500" fill="#d80000"/>
      <text class="ax ax-z" x="952" y="497">Z</text>
      <text class="ax ax-y" x="1271" y="497">Y</text>
      <text class="ax ax-x" x="949" y="804">X</text>
      <rect x="714.500" y="804.500" width="156" height="6" fill="#fff" stroke="#000"/>
      <rect x="870" y="804" width="156" height="7" fill="#000"/>
      <text class="sc" x="714" y="826" text-anchor="middle">0</text>
      <text class="sc" x="870" y="826" text-anchor="middle">25</text>
      <text class="sc" x="1019" y="826">50 (mm)</text>
    </svg>
  </section>
</main>

<section class="bottom">
  <div class="side"><svg class="side-x"><use href="#i-cl"/></svg><i class="side-ar"></i><span class="side-lb">Message Manager</span></div>
  <div class="msgs mono">
    <div class="mrow"><i class="t m"></i><svg class="mic"><use href="#t-proj"/></svg><span class="mtx mtx-sel">zuoye c=20 m=20 r=20  (C:/Users/1023/Documents/Ansoft/dazuoyemoxing/)</span></div>
    <div class="mrow"><i class="n"></i><i class="t m last"></i><svg class="mic"><use href="#t-des"/></svg><span class="mtx">Maxwell2DDesign1  (Magnetostatic, XY)</span></div>
    <div class="mrow mrow-w"><i class="n"></i><i class="n"></i><i class="jw"></i><svg class="mic"><use href="#t-info"/></svg><span class="mtx mtx-w">Normal completion of simulation on server: Local Machine.  (4:50:25 下午  三月 03, 2016)</span></div>
    <div class="mrow"><i class="n"></i><i class="n"></i><i class="lw"></i><svg class="mic"><use href="#t-warn"/></svg><span class="mtx mtx-w">Cannot create 'Mesh' plot on line.  (4:51:42 下午  三月 03, 2016)</span></div>
  </div>
  <div class="side side2"><svg class="side-x"><use href="#i-cl"/></svg><i class="side-ar"></i><span class="side-lb">Progress</span></div>
  <div class="progress"></div>
</section>

<footer class="status">
  <span class="st-text">Nothing is selected</span>
  <span class="st-p st-a"></span><span class="st-p st-num">NUM</span><span class="st-p st-c"></span>
</footer>

<div class="taskbar">
  <svg class="orb"><use href="#k-orb"/></svg>
  <span class="tk-b tk-folder"><svg class="tk-i"><use href="#k-folder"/></svg></span>
  <span class="tk-c m5"><svg class="tk-i"><use href="#k-qq"/></svg></span>
  <span class="tk-c m4"><svg class="tk-i"><use href="#k-red"/></svg></span>
  <span class="tk-c"><svg class="tk-i"><use href="#k-calc"/></svg></span>
  <span class="tk-c"><svg class="tk-i"><use href="#k-globe"/></svg></span>
  <span class="tk-c"><svg class="tk-i"><use href="#k-ie"/></svg></span>
  <span class="tk-b m4"><svg class="tk-i"><use href="#k-s"/></svg></span>
  <span class="tk-b tk-g"><svg class="tk-i"><use href="#k-fox"/></svg></span>
  <span class="tk-b tk-g"><svg class="tk-i"><use href="#k-mesh"/></svg></span>
  <span class="tk-b tk-g"><svg class="tk-i"><use href="#k-swirl"/></svg></span>
  <span class="tk-b tk-g"><svg class="tk-i"><use href="#k-mx"/></svg></span>
  <span class="tk-b tk-g tk-act"><svg class="tk-i"><use href="#k-photo"/></svg></span>
  <div class="tray">
    <span class="tr tr-sun"><svg class="tr-i"><use href="#k-sun"/></svg></span>
    <span class="tr tr-temp">1℃</span>
    <span class="tr tr-car"><i></i></span>
    <span class="tr tr-flag"><svg class="tr-i2"><use href="#k-flag"/></svg></span>
    <span class="tr tr-net"><svg class="tr-i2"><use href="#k-net"/></svg></span>
    <span class="tr tr-spk"><svg class="tr-i2"><use href="#k-spk"/></svg></span>
    <span class="tr tr-time">17:05</span>
    <span class="tr-show"></span>
  </div>
</div>
</body>
</html>
```

FILE: styles.css
```css
* { box-sizing: border-box; }
html, body { margin: 0; padding: 0; }
body {
  width: 1279px; height: 1024px; overflow: hidden; position: relative;
  background: #f0f0f0; display: flex; flex-direction: column;
  font-family: "Noto Sans", "Noto Sans CJK SC", sans-serif; font-size: 12px; color: #111;
}
i { display: block; font-style: normal; }
.defs { position: absolute; }
.mono { font-family: "Liberation Mono", "Noto Sans CJK SC", monospace; font-size: 10px; }

/* title bar */
.titlebar {
  height: 21px; flex: none; display: flex; align-items: center; padding-left: 2px; position: relative;
  background: linear-gradient(90deg, #8fb0d6 0, #a8c0dc 40%, #a0bcdc 68%, #4f83bb 71%, #14508f 75%, #14508f 100%);
  border-bottom: 1px solid #1c3f66;
}
.title-ic { width: 17px; height: 17px; flex: none; }
.title-text { margin-left: 2px; white-space: pre; font-size: 12.760px; color: #101010; }
.winbtns { position: absolute; right: 0; top: 0; height: 17px; display: flex; border: 1px solid #6c8cb4; border-top: 0; border-right: 0; border-radius: 0 0 0 4px; width: 104px; }
.wb { display: flex; align-items: center; justify-content: center; color: #fff; border-right: 1px solid #6c8cb4; background: linear-gradient(#3d72ac, #14508f); }
.wb-min { width: 29px; } .wb-res { width: 26px; } .wb-cls { flex: 1; font-size: 12px; font-weight: 700; border-right: 0; }
.wb-min i { width: 10px; height: 3px; background: #fff; margin-top: 5px; }
.wb-res i { width: 9px; height: 10px; border: 2px solid #fff; box-shadow: 2px -2px 0 -1px #fff; }

/* menu */
.menubar {
  height: 20px; flex: none; display: flex; align-items: center; position: relative;
  background: linear-gradient(#fdfdfe, #eef1f9 35%, #d4dbee); border-bottom: 1px solid #b8c0cc;
}
.doc-ic { width: 15px; height: 15px; margin-left: 7px; flex: none; }
.mi { font-size: 12.500px; color: #6a6a6a; white-space: nowrap; }
.mi-file { margin-left: 8px; } .mi-edit { margin-left: 13px; } .mi-view { margin-left: 14px; }
.mi-proj { margin-left: 13px; } .mi-draw { margin-left: 13px; } .mi-mod { margin-left: 14px; }
.mi-mx { margin-left: 14px; } .mi-tools { margin-left: 14px; } .mi-win { margin-left: 15px; } .mi-help { margin-left: 14px; }
.mdibtns { position: absolute; right: 0; top: 3px; display: flex; gap: 2px; }
.mb { width: 18px; height: 16px; border: 1px solid #a8b0c4; background: #d8deec; display: flex; align-items: center; justify-content: center; color: #707888; font-size: 10px; }
.mb-min { width: 7px; height: 2px; background: #707888; margin-top: 6px; }
.mb-res { width: 8px; height: 8px; border: 1px solid #707888; box-shadow: 2px -2px 0 -1px #707888; }

/* toolbars */
.toolbars { height: 89px; flex: none; position: relative; background: #f1f1f1; }
.tb { display: flex; align-items: center; padding-left: 2px; }
.tb1 { height: 30px; } .tb2 { height: 29px; } .tb3 { height: 30px; padding-top: 1px; }
.gr { width: 3px; height: 20px; flex: none; margin-right: 1px; background: repeating-linear-gradient(#111 0 2px, transparent 2px 4px); }
.sp { width: 1px; height: 21px; flex: none; background: #c4c4c4; }
.tl { width: 23px; height: 20px; flex: none; }
.tl.on { height: 23px; background: #d8e8f8; border: 1px solid #3c90e8; }
.m1 { margin-left: 1px; } .m2 { margin-left: 2px; } .m3 { margin-left: 3px; } .m4 { margin-left: 4px; }
.m5 { margin-left: 5px; } .m6 { margin-left: 6px; } .m8 { margin-left: 8px; } .m9 { margin-left: 9px; }
.m10 { margin-left: 9px; } .m11 { margin-left: 10px; } .m12 { margin-left: 11px; }
.combo {
  width: 98px; height: 18px; flex: none; background: #fff; display: flex; align-items: center;
  border: 2px solid; border-color: #6a6a6a #e4e4e4 #e4e4e4 #6a6a6a;
  font-family: "Liberation Mono", monospace; font-size: 10px;
}
.combo-v { flex: 1; padding-left: 2px; color: #000; }
.dd { width: 16px; height: 14px; background: #ececec; border: 1px solid #c0c0c0; display: flex; align-items: center; justify-content: center; }
.dd::before { content: ""; border: 4px solid transparent; border-top: 5px solid #000; border-bottom: 0; }
.combo-hid { width: 110px; }
.upload { position: absolute; left: 1032px; top: 4px; width: 103px; height: 25px; display: flex; border: 1px solid #2a84c8; border-radius: 3px; box-shadow: 0 1px 2px rgba(0,0,0,.35); overflow: hidden; }
.upload-ic { width: 29px; background: #1e8fe4; display: flex; align-items: center; justify-content: center; }
.upload-svg { width: 22px; height: 17px; }
.upload-tx { flex: 1; background: linear-gradient(#b8e2f8, #8cc8ee); color: #5c7c90; text-align: center; line-height: 24px; font-size: 12px; }

/* workspace */
.workspace { height: 706px; flex: none; display: flex; align-items: flex-start; }
.leftcol { width: 260px; flex: none; height: 706px; padding-top: 3px; }
.dock-h {
  height: 14px; margin-left: 3px; width: 254px; border: 1px solid #a0a0a0; border-radius: 2px;
  display: flex; align-items: center; font-size: 10.800px; line-height: 12px; padding-left: 2px; color: #222;
}
.dock-h span { flex: 1; }
.dock-h1 span { margin-top: -1px; }
.dh-up { width: 7px; height: 5px; margin-right: 7px; }
.dh-cl { width: 8px; height: 8px; margin-right: 4px; }
.ptree-frame { margin: 8px 0 0 13px; width: 239px; height: 295px; border: 2px solid; border-color: #7a7a7a #b0b0b0 #b0b0b0 #7a7a7a; background: #f0f0f0; display: flex; flex-direction: column; }
.ptree-main { display: flex; height: 273px; flex: none; }
.ptree { width: 216px; flex: none; padding: 1px 0 0 13px; background: #fff; height: 273px; overflow: hidden; }
.row { display: flex; align-items: center; white-space: nowrap; }
.ptree .row { height: 18px; }
.mtree .row { height: 20px; }

/* tree connectors: vertical dotted line in a cell, horizontal dotted line out of it */
.g, .n, .t, .l, .j { width: 19px; height: 100%; flex: none; }
.g, .j, .t { background: linear-gradient(#808080 50%, transparent 50%) 9px 0 / 1px 2px repeat-y; }
.l, .t.last {
  background: linear-gradient(#fff, #fff) 0 100% / 100% 50% no-repeat,
    linear-gradient(#808080 50%, transparent 50%) 9px 0 / 1px 2px repeat-y;
}
.l, .j, .t { position: relative; }
.l::after, .j::after, .t::after {
  content: ""; position: absolute; left: 10px; right: 0; top: 50%; height: 1px;
  background: linear-gradient(90deg, #808080 50%, transparent 50%) 0 0 / 2px 1px repeat-x;
}
.t::before {
  content: ""; position: absolute; left: 5px; top: 50%; margin-top: -5px; width: 9px; height: 9px; z-index: 1;
  border: 1px solid #7a7a7a; background-color: #fff; background-repeat: no-repeat;
}
.t.p::before { background-image: linear-gradient(#000, #000), linear-gradient(#000, #000); background-size: 5px 1px, 1px 5px; background-position: 1px 3px, 3px 1px; }
.t.m::before { background-image: linear-gradient(#000, #000); background-size: 5px 1px; background-position: 1px 3px; }
.ic { width: 19px; height: 16px; flex: none; }
.ptree .ic { height: 18px; }
.lb { padding: 0 1px; margin-left: 1px; }
.ptree .lb { letter-spacing: .1px; }
.sel { background: #f0f0f0; }
.tab-row { height: 17px; margin-left: 10px; }
.tab { display: block; width: 55px; height: 17px; border: 1px solid #b8b8b8; border-top: 0; border-right: 2px solid #808080; border-bottom: 2px solid #808080; padding: 3px 0 0 5px; line-height: 11px; letter-spacing: .1px; background: #f0f0f0; }
.split { margin-top: 14px; height: 2px; background: #9a9a9a; }
.dock-h2 { margin-top: 2px; }
.props { margin: 5px 0 0 7px; width: 245px; height: 316px; border: 2px solid; border-color: #9a9a9a #b8b8b8 #c4c4c4 #d8d8d8; background: #f0f0f0; }

/* scrollbars */
.vs { width: 15px; flex: none; display: flex; flex-direction: column; align-items: center; background: #f0f0f0; }
.hs { height: 15px; flex: none; display: flex; align-items: center; background: #f0f0f0; }
.ar { flex: none; display: flex; }
.ar-u, .ar-d { width: 15px; height: 15px; position: relative; }
.ar-u::before, .ar-d::before, .ar-l::before, .ar-r::before { content: ""; position: absolute; }
.ar-u::before { left: 4px; top: 6px; border: 4px solid transparent; border-top: 0; border-bottom: 4px solid #555; }
.ar-d::before { left: 4px; top: 6px; border: 4px solid transparent; border-bottom: 0; border-top: 4px solid #555; }
.ar-l, .ar-r { height: 15px; position: relative; }
.ar-l::before { left: 6px; top: 4px; border: 4px solid transparent; border-left: 0; border-right: 4px solid #555; }
.ar-r::before { right: 6px; top: 4px; border: 4px solid transparent; border-right: 0; border-left: 4px solid #555; }
.th { flex: none; border: 1px solid #a4a4a4; border-radius: 2px; }
.th-l, .th-m {
  width: 15px;
  background: linear-gradient(#777, #777) center / 7px 1px no-repeat, linear-gradient(#777, #777) 3px calc(50% - 2px) / 7px 1px no-repeat, linear-gradient(#777, #777) 3px calc(50% + 2px) / 7px 1px no-repeat, linear-gradient(90deg, #f4f4f4, #c8c8c8);
}
.vs-left { height: 273px; }
.vs-left .th-l { height: 197px; margin-top: 42px; }
.vs-left .ar-d { margin-top: 3px; }
.hs-left { height: 15px; margin-top: 2px; }
.hs-left .ar-l { width: 19px; }
.hs-left .ar-r { width: 74px; }
.th-h1, .th-h2 {
  height: 14px;
  background: linear-gradient(90deg, #777 1px, transparent 1px 2px) center / 8px 7px repeat-y, linear-gradient(#f4f4f4, #c8c8c8);
}
.th-h1 { width: 120px; }

/* model tree */
.modeltree { margin: 3px 0 0 5px; width: 190px; height: 697px; flex: none; border: solid; border-width: 1px 2px 2px 1px; border-color: #9a9a9a #b8b8b8 #b8b8b8 #9a9a9a; background: #fff; display: flex; flex-direction: column; }
.mt-main { display: flex; height: 680px; flex: none; }
.mtree { width: 172px; height: 680px; overflow: hidden; flex: none; }
.mtree .lb { margin-left: 2px; font-size: 12.300px; color: #101828; }
.vs-mid { height: 680px; }
.th-m { height: 622px; margin-top: 3px; }
.vs-mid .ar-d { margin-top: 22px; }
.hs-mid { background: #f0f0f0; }
.hs-mid .ar-l { width: 19px; }
.hs-mid .ar-r { width: 35px; }
.th-h2 { width: 118px; }

/* viewport */
.viewport { margin: 3px 0 0 6px; width: 818px; height: 697px; flex: none; background: #fff; border-top: 2px solid #6a6a6a; border-left: 2px solid #6a6a6a; overflow: hidden; }
.model { display: block; width: 818px; height: 697px; margin: -2px 0 0 -2px; }
.sc { font-family: "Liberation Sans", sans-serif; font-size: 12px; fill: #111; }
.ax { font-family: "Liberation Sans", sans-serif; font-size: 9px; font-weight: 700; }
.ax-z { fill: #e00000; } .ax-y { fill: #0000f0; } .ax-x { fill: #007a00; }

/* bottom */
.bottom { height: 136px; flex: none; display: flex; border-top: 2px solid #8a8a8a; padding: 3px 0; align-items: stretch; }
.side { width: 18px; flex: none; display: flex; flex-direction: column; align-items: center; padding-top: 2px; position: relative; border-left: 1px solid #c0c0c0; }
.side-x { width: 8px; height: 8px; }
.side-ar { margin-top: 6px; border: 4px solid transparent; border-left: 0; border-right: 4px solid #333; }
.side-lb { writing-mode: vertical-rl; transform: rotate(180deg); font-size: 9.700px; line-height: 12px; margin-top: auto; color: #222; }
.msgs { width: 618px; flex: none; background: #fff; border: solid; border-width: 2px 2px 2px 1px; border-color: #8a8a8a #b0b0b0 #b0b0b0 #8a8a8a; }
.mrow { display: flex; align-items: center; height: 15px; }
.mrow .t, .mrow .n { width: 19px; height: 15px; }
.mrow-w { height: 27px; margin-top: 2px; }
.mrow-w .n { height: 27px; }
.jw, .lw { width: 26px; height: 100%; flex: none; margin-left: 11px; position: relative; background: linear-gradient(#808080 50%, transparent 50%) 0 0 / 1px 2px repeat-y; }
.lw { height: 11px; align-self: flex-start; }
.jw::after, .lw::after { content: ""; position: absolute; left: 1px; width: 22px; height: 1px; background: linear-gradient(90deg, #808080 50%, transparent 50%) 0 0 / 2px 1px repeat-x; }
.jw::after { top: 50%; }
.lw::after { bottom: 3px; }
.mic { width: 16px; height: 15px; flex: none; margin-left: 1px; margin-right: 4px; }
.mtx { white-space: pre-wrap; line-height: 11px; margin-left: 3px; }
.mtx-sel { background: #f0f0f0; padding: 2px 4px 2px 3px; margin-left: 0; }
.mtx-w { width: 486px; margin-left: 2px; }
.side2 { margin-left: 8px; }
.progress { width: 615px; flex: none; background: #fff; border: 2px solid; border-color: #8a8a8a #e0e0e0 #e0e0e0 #8a8a8a; }

/* status */
.status { height: 22px; flex: none; border-top: 2px solid #c4c4c4; display: flex; align-items: flex-end; padding-left: 2px; }
.st-text { font-size: 12.500px; line-height: 16px; width: 1174px; flex: none; }
.st-p { height: 17px; border: 1px solid #b4b4b4; border-bottom: 0; flex: none; display: block; }
.st-a { width: 28px; }
.st-num { width: 35px; margin-left: 3px; font-size: 12.500px; line-height: 16px; text-align: center; font-family: "Liberation Sans", sans-serif; }
.st-c { width: 33px; margin-left: 4px; border-right: 0; }

/* taskbar */
.taskbar {
  height: 30px; flex: none; display: flex; align-items: center; padding-left: 60px; position: relative;
  border-top: 1px solid #1c3a58;
  background: linear-gradient(102deg, transparent 79%, rgba(180,205,225,.55) 80.500%, rgba(180,205,225,.2) 82%, transparent 83%),
    linear-gradient(90deg, #3a8ac2 0, #2b80c2 50%, #1f74b8 60%, #15548f 68%, #15548f 100%);
}
.orb { position: absolute; left: 0; top: -6px; width: 46px; height: 46px; }
.tk-b { width: 42px; height: 28px; flex: none; display: flex; align-items: center; justify-content: center; border: 1px solid rgba(12,40,70,.8); border-radius: 3px; background: linear-gradient(rgba(255,255,255,.35), rgba(255,255,255,.1) 50%, rgba(255,255,255,.02)); box-shadow: inset 0 0 0 1px rgba(255,255,255,.25); }
.tk-folder { width: 38px; background: linear-gradient(rgba(255,255,255,.5), rgba(255,255,255,.2)); }
.tk-g { margin-left: 4px; }
.tk-act { background: linear-gradient(rgba(255,255,255,.85), rgba(230,240,250,.55)); }
.tk-c { width: 45px; height: 28px; flex: none; display: flex; align-items: center; justify-content: center; }
.tk-i { width: 22px; height: 22px; }
.tray { position: absolute; right: 0; top: 0; height: 29px; display: flex; align-items: center; color: #eaf2fa; font-size: 12px; }
.tr { display: flex; align-items: center; justify-content: center; height: 29px; flex: none; }
.tr-sun { width: 24px; } .tr-temp { width: 44px; } .tr-car { width: 24px; } .tr-flag { width: 24px; }
.tr-net { width: 24px; margin-left: 25px; } .tr-spk { width: 22px; } .tr-time { width: 60px; margin-left: 1px; }
.tr-i { width: 20px; height: 20px; }
.tr-i2 { width: 18px; height: 18px; }
.tr-car i { border: 4px solid transparent; border-top: 0; border-bottom: 4px solid #fff; }
.tr-show { width: 12px; height: 29px; background: #1f5f9e; border: 1px solid #5c88b4; }
```
